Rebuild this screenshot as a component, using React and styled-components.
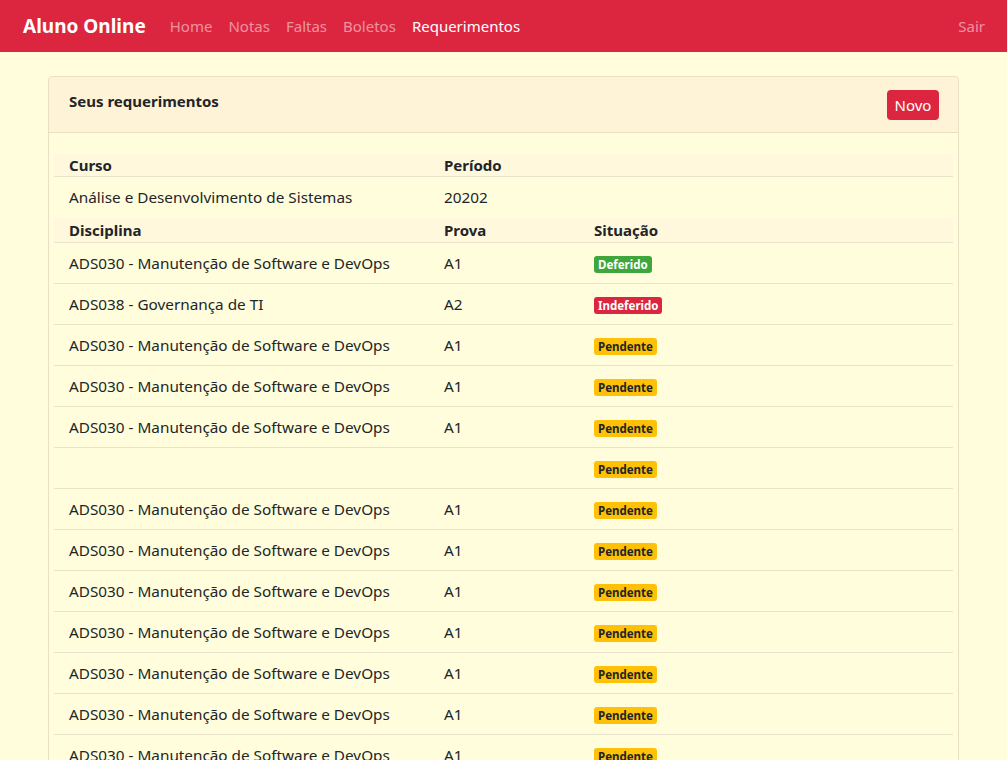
import React from "react";
import styled, { createGlobalStyle } from "styled-components";

const Global = createGlobalStyle`
  html, body {
    margin: 0;
    background: #fffddb;
    font-family: "Noto Sans", "Open Sans", sans-serif;
    color: #212529;
  }
`;

const Nav = styled.nav`
  height: 52px;
  background: #dc2640;
  display: flex;
  align-items: center;
  padding: 0 22px 0 23px;
`;

const Brand = styled.div`
  font-size: 19px;
  font-weight: 700;
  color: #fff;
  margin-right: 24px;
`;

const NavLink = styled.a`
  font-size: 15px;
  color: ${({ $active }) => ($active ? "#fff" : "rgba(255,255,255,0.5)")};
  margin-right: ${({ $last }) => ($last ? "0" : "16px")};
  text-decoration: none;
`;

const Spacer = styled.div`
  flex: 1;
`;

const Container = styled.main`
  padding: 24px 48px;
`;

const Card = styled.section`
  border: 1px solid #eadfc0;
  border-radius: 4px;
  background: #fffddb;
`;

const CardHeader = styled.header`
  background: #fff3d7;
  border-bottom: 1px solid #eadfc0;
  height: 55px;
  display: flex;
  align-items: center;
  justify-content: space-between;
  padding: 0 19px 0 20px;
  border-radius: 4px 4px 0 0;

  h5 {
    margin: 0 0 8px;
    font-size: 15px;
    font-weight: 700;
  }
`;

const Button = styled.button`
  background: #dc2640;
  color: #fff;
  border: none;
  border-radius: 4px;
  height: 30px;
  width: 52px;
  padding: 0;
  font-family: inherit;
  font-size: 15px;
  margin-top: 1px;
`;

const CardBody = styled.div`
  padding: 21px 5px 0;
`;

const Table = styled.table`
  width: 100%;
  border-collapse: collapse;
  font-size: 15.3px;

  th, td {
    text-align: left;
    padding: 0 15px;
  }
  th:nth-child(1), td:nth-child(1) { width: 345px; }
  th:nth-child(2), td:nth-child(2) { width: 120px; }
`;

const HeadRow = styled.tr`
  background: #fff8dc;
  height: ${({ $h }) => $h || "22px"};
  border-bottom: 1px solid #eae3cb;

  th {
    font-weight: 700;
    font-size: 15px;
    vertical-align: middle;
  }
`;

const Row = styled.tr`
  height: ${({ $h }) => $h || "41px"};
  border-top: ${({ $first }) => ($first ? "none" : "1px solid #eae3cb")};
`;

const BADGE = {
  Deferido: ["#3fa63c", "#fff"],
  Indeferido: ["#dc2640", "#fff"],
  Pendente: ["#ffc107", "#212529"],
};

const Badge = styled.span`
  display: inline-block;
  font-size: 11.5px;
  font-weight: 700;
  line-height: 17px;
  padding: 0 4px;
  border-radius: 3px;
  margin-top: 2px;
  background: ${({ $s }) => BADGE[$s][0]};
  color: ${({ $s }) => BADGE[$s][1]};
`;

const MAN = "ADS030 - Manutenção de Software e DevOps";
const rows = [
  [MAN, "A1", "Deferido"],
  ["ADS038 - Governança de TI", "A2", "Indeferido"],
  [MAN, "A1", "Pendente"],
  [MAN, "A1", "Pendente"],
  [MAN, "A1", "Pendente"],
  ["", "", "Pendente"],
  [MAN, "A1", "Pendente"],
  [MAN, "A1", "Pendente"],
  [MAN, "A1", "Pendente"],
  [MAN, "A1", "Pendente"],
  [MAN, "A1", "Pendente"],
  [MAN, "A1", "Pendente"],
  [MAN, "A1", "Pendente"],
];

export default function App() {
  return (
    <>
      <Global />
      <Nav>
        <Brand>Aluno Online</Brand>
        <NavLink>Home</NavLink>
        <NavLink>Notas</NavLink>
        <NavLink>Faltas</NavLink>
        <NavLink>Boletos</NavLink>
        <NavLink $active>Requerimentos</NavLink>
        <Spacer />
        <NavLink $last>Sair</NavLink>
      </Nav>
      <Container>
        <Card>
          <CardHeader>
            <h5>Seus requerimentos</h5>
            <Button>Novo</Button>
          </CardHeader>
          <CardBody>
            <Table>
              <tbody>
                <HeadRow>
                  <th>Curso</th>
                  <th>Período</th>
                  <th></th>
                </HeadRow>
                <Row $first $h="42px">
                  <td>Análise e Desenvolvimento de Sistemas</td>
                  <td>20202</td>
                  <td></td>
                </Row>
                <HeadRow $h="24px">
                  <th>Disciplina</th>
                  <th>Prova</th>
                  <th>Situação</th>
                </HeadRow>
                {rows.map(([d, p, s], i) => (
                  <Row key={i} $first={i === 0}>
                    <td>{d}</td>
                    <td>{p}</td>
                    <td>
                      <Badge $s={s}>{s}</Badge>
                    </td>
                  </Row>
                ))}
              </tbody>
            </Table>
          </CardBody>
        </Card>
      </Container>
    </>
  );
}
